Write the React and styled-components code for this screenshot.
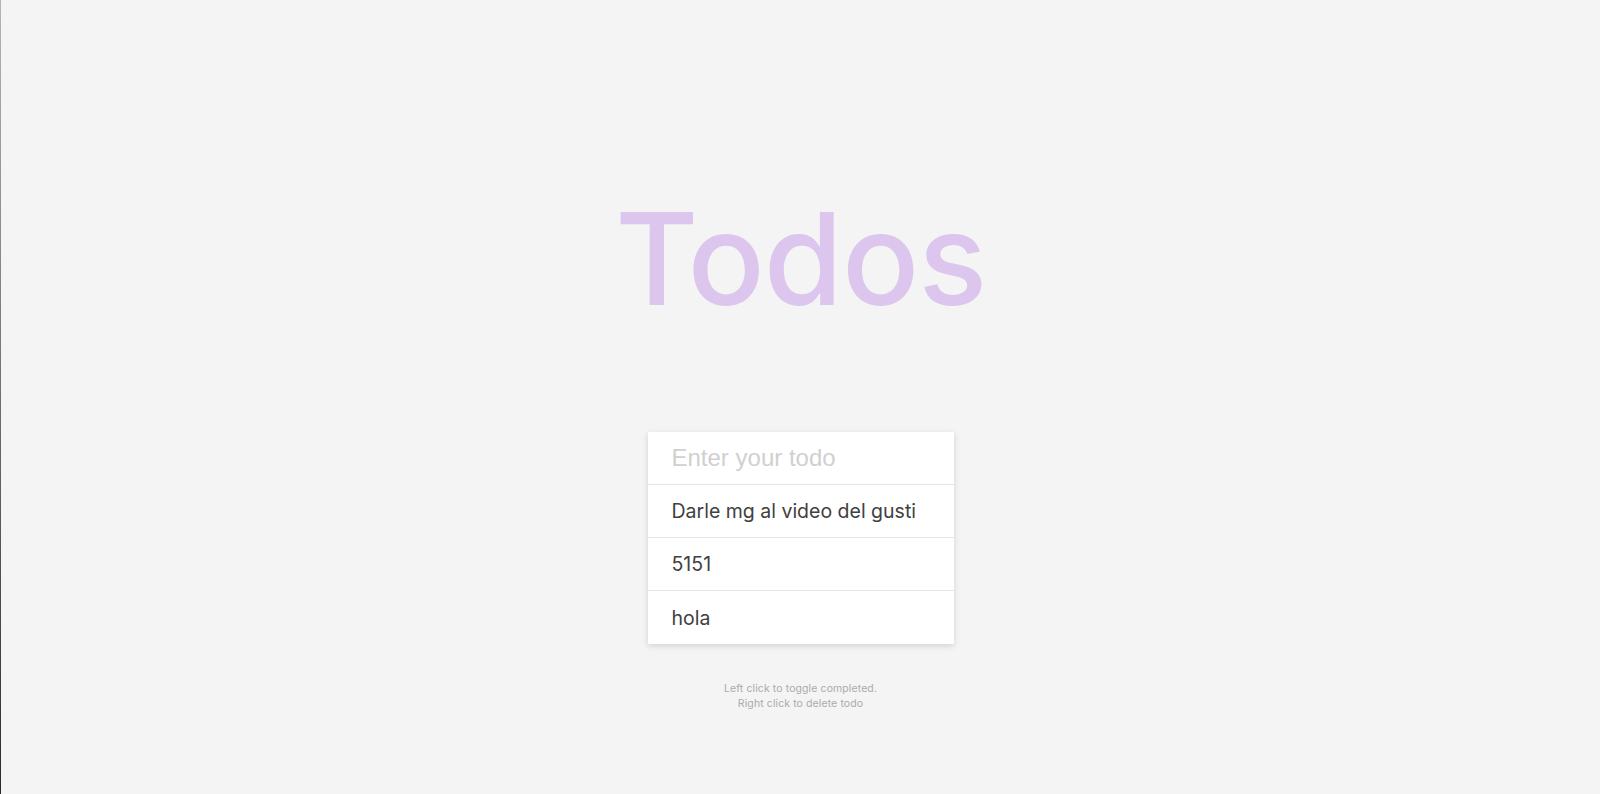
import React from 'react'
import styled, { createGlobalStyle } from 'styled-components'

const GlobalStyle = createGlobalStyle`
  html, body {
    margin: 0;
    padding: 0;
    background: #f4f4f4;
    font-family: Inter, "Noto Sans", sans-serif;
  }
`

const Page = styled.div`
  min-height: 794px;
  box-sizing: border-box;
  display: flex;
  flex-direction: column;
  align-items: center;
  border-left: 1px solid;
  border-image: linear-gradient(#b5b5b5, #2a2a2a) 1;
`

const Title = styled.h1`
  margin: 180px 0 0;
  font-family: Inter, sans-serif;
  font-weight: 500;
  font-size: 128px;
  line-height: 158px;
  letter-spacing: -1px;
  color: #dcc6ee;
`

const Card = styled.div`
  margin-top: 94px;
  width: 306px;
  background: #fff;
  box-shadow: 0 2px 6px rgba(0, 0, 0, 0.14);
`

const Input = styled.input`
  display: block;
  box-sizing: border-box;
  width: 100%;
  height: 53px;
  border: none;
  border-bottom: 1px solid #e6e6e6;
  padding: 0 24px;
  font-family: "Liberation Sans", Arial, sans-serif;
  font-size: 24px;
  color: #333;
  outline: none;
  &::placeholder {
    color: #d0d0d0;
  }
`

const Item = styled.li`
  box-sizing: border-box;
  height: 53px;
  display: flex;
  align-items: center;
  padding: 0 24px;
  font-size: 19.5px;
  color: ${p => (p.done ? '#bbb' : '#404040')};
  text-decoration: ${p => (p.done ? 'line-through' : 'none')};
  border-bottom: 1px solid #e6e6e6;
  cursor: pointer;
  &:last-child {
    border-bottom: none;
  }
`

const List = styled.ul`
  list-style: none;
  margin: 0;
  padding: 0;
`

const Hint = styled.small`
  margin-top: 37px;
  text-align: center;
  font-size: 10.5px;
  line-height: 15px;
  letter-spacing: 0.1px;
  color: #ababab;
`

const todos = ['Darle mg al video del gusti', '5151', 'hola']

export default function App() {
  return (
    <>
      <GlobalStyle />
      <Page>
        <Title>Todos</Title>
        <Card>
          <Input placeholder="Enter your todo" />
          <List>
            {todos.map(t => (
              <Item key={t}>{t}</Item>
            ))}
          </List>
        </Card>
        <Hint>
          Left click to toggle completed.
          <br />
          Right click to delete todo
        </Hint>
      </Page>
    </>
  )
}
